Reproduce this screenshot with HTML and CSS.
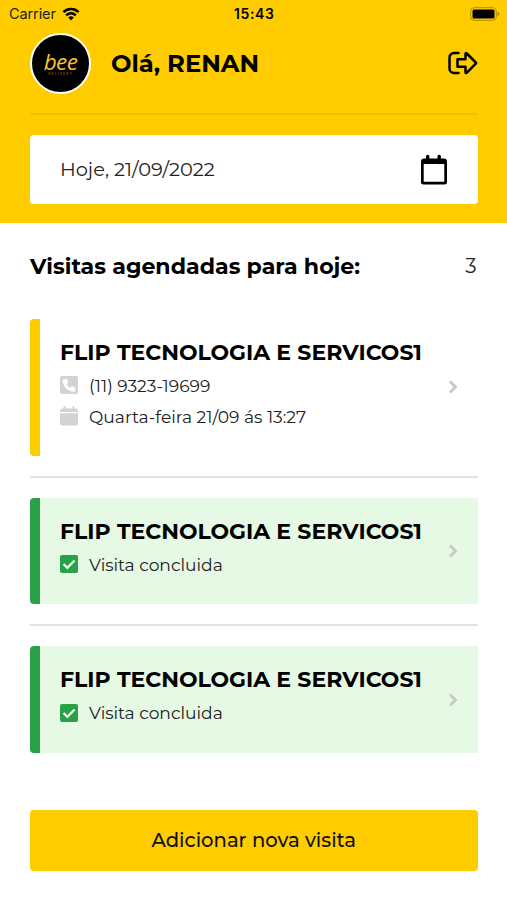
FILE: index.html
```html
<!DOCTYPE html>
<html lang="pt-BR">
<head>
<meta charset="utf-8">
<meta name="viewport" content="width=device-width, initial-scale=1">
<title>Visitas</title>
<link rel="stylesheet" href="styles.css">
</head>
<body>
<header class="header">
  <div class="status">
    <div class="carrier"><span>Carrier</span>
      <svg width="18" height="14" viewBox="0 0 18 14"><path d="M9 13.4 6.2 10.5a4 4 0 0 1 5.600 0Z"/><path d="M4.200 8.300a6.800 6.800 0 0 1 9.600 0M1.400 5.100a10.900 10.900 0 0 1 15.200 0" fill="none" stroke="#000" stroke-width="2.500"/></svg>
    </div>
    <time class="clock">15:43</time>
    <svg class="battery" width="30" height="14" viewBox="0 0 30 14"><rect x=".7" y=".7" width="25.6" height="12.6" rx="3.5" fill="none" stroke="#b08e00"/><rect x="2.5" y="2.5" width="22" height="9" rx="1.5"/><path d="M27.5 4.800q2 .8 2 2.200t-2 2.200z" fill="#b08e00"/></svg>
  </div>
  <div class="profile">
    <div class="logo"><span class="brand">bee</span><span class="brand-sub">DELIVERY</span></div>
    <h1>Olá, RENAN</h1>
    <svg class="exit" width="31" height="24" viewBox="0 0 31 24" fill="none" stroke="#000" stroke-width="2.5" stroke-linejoin="round" stroke-linecap="round"><path d="M11.500 2H7a4.500 4.500 0 0 0-4.500 4.500v11A4.500 4.500 0 0 0 7 22h4.500"/><path d="M10.500 8.200h8V3q0-1.500 1.300-.5l9 9q.7.600 0 1.200l-9 9q-1.300 1-1.300-.5v-5.500h-8z"/></svg>
  </div>
  <div class="date-field"><span>Hoje, 21/09/2022</span>
    <svg width="28" height="32" viewBox="0 0 28 32"><path d="M7.700 2.500v6M19.200 2.500v6" fill="none" stroke="#000" stroke-width="3.400" stroke-linecap="round"/><path d="M4 4.500h20a3 3 0 0 1 3 3v20.500a2.500 2.500 0 0 1-2.500 2.500h-21A2.500 2.500 0 0 1 1 28V7.500a3 3 0 0 1 3-3M3.700 10v17.800h20.600V10z" fill-rule="evenodd"/></svg>
  </div>
</header>
<main>
  <div class="heading"><h2>Visitas agendadas para hoje:</h2><span class="count">3</span></div>
  <ul class="visits">
    <li class="visit pending">
      <div class="details">
        <h3>FLIP TECNOLOGIA E SERVICOS1</h3>
        <p class="phone"><svg width="18" height="18" viewBox="0 0 18 18"><rect width="18" height="18" rx="2" fill="#d3d3d3"/><path d="m3 3.700 3-.9c.5-.1.800.1 1 .5l1.100 2.700c.1.400 0 .7-.2.900L6.400 8.200a9.500 9.500 0 0 0 3.800 3.600l1.300-1.400c.3-.3.600-.3.900-.2l2.700 1.100c.4.200.6.500.5 1l-.8 2.900q-.1.500-.7.500C8 15.500 2.500 10 2.500 4.400q0-.6.500-.7" fill="#fff"/></svg><span>(11) 9323-19699</span></p>
        <p class="when"><svg width="18" height="20" viewBox="0 0 18 20" fill="#d3d3d3"><path d="M2 2.500h1.500V1q0-1 1-1t1 1v1.500h7V1q0-1 1-1t1 1v1.500H16q2 0 2 2V6H0V4.500q0-2 2-2M0 7.200h18v10.300q0 2-2 2H2q-2 0-2-2z"/></svg><span>Quarta-feira 21/09 ás 13:27</span></p>
      </div>
      <svg class="chevron" width="10" height="16" viewBox="0 0 10 16"><path d="m2 2.500 5.500 5.500L2 13.500"/></svg>
    </li>
    <li class="visit done">
      <div class="details">
        <h3>FLIP TECNOLOGIA E SERVICOS1</h3>
        <p class="result"><svg width="18" height="18" viewBox="0 0 18 18"><rect width="18" height="18" rx="2" fill="#28a148"/><path d="m3.500 9 3.800 3.800 7.300-7.300" fill="none" stroke="#e5f9e4" stroke-width="2.400"/></svg><span>Visita concluida</span></p>
      </div>
      <svg class="chevron" width="10" height="16" viewBox="0 0 10 16"><path d="m2 2.500 5.500 5.500L2 13.500"/></svg>
    </li>
    <li class="visit done">
      <div class="details">
        <h3>FLIP TECNOLOGIA E SERVICOS1</h3>
        <p class="result"><svg width="18" height="18" viewBox="0 0 18 18"><rect width="18" height="18" rx="2" fill="#28a148"/><path d="m3.500 9 3.800 3.800 7.300-7.300" fill="none" stroke="#e5f9e4" stroke-width="2.400"/></svg><span>Visita concluida</span></p>
      </div>
      <svg class="chevron" width="10" height="16" viewBox="0 0 10 16"><path d="m2 2.500 5.500 5.500L2 13.500"/></svg>
    </li>
  </ul>
  <button class="add">Adicionar nova visita</button>
</main>
</body>
</html>
```
FILE: styles.css
```css
* { box-sizing: border-box; }
body { margin: 0; height: 900px; background: #fff; color: #000; font-family: Montserrat, Inter, sans-serif; overflow: hidden; }
h1, h2, h3, p, ul { margin: 0; padding: 0; }
svg { display: block; flex: none; }
.header { height: 223px; padding: 0 29.5px 0 30px; background: #fc0; }
.status { display: grid; grid-template-columns: 1fr auto 1fr; align-items: center; height: 27px; margin: 0 -22px 0 -21px; font-family: Inter, sans-serif; }
.carrier { display: flex; align-items: center; gap: 6px; font-size: 14.5px; letter-spacing: -.1px; color: #222; }
.clock { font-size: 14px; font-weight: 600; letter-spacing: .6px; }
.battery { justify-self: end; }
.profile { display: flex; align-items: center; height: 88px; padding-bottom: 13.500px; border-bottom: 2px solid #f0c000; }
.logo { display: flex; flex-direction: column; align-items: center; width: 61px; height: 61px; padding-top: 15px; border: 2px solid #fff; border-radius: 50%; background: #000; color: #f5c330; }
.brand { font: italic 22.500px/24px "Open Sans", sans-serif; letter-spacing: -.6px; }
.brand-sub { margin-top: -2px; font: 3.500px/4px Inter, sans-serif; letter-spacing: 1px; color: #a17b20; }
h1 { flex: 1; margin-left: 20px; font-size: 24.300px; font-weight: 700; line-height: 30px; white-space: nowrap; }
.date-field { display: flex; align-items: center; justify-content: space-between; height: 69px; margin-top: 20px; padding: 0 30px; border-radius: 4px; background: #fff; color: #222; font-size: 19.400px; }
.date-field span { padding-bottom: 2px; }
main { padding: 0 29.5px 0 30px; }
.heading { display: flex; justify-content: space-between; align-items: center; height: 85px; }
h2 { padding-top: 2px; font-size: 22.100px; font-weight: 700; white-space: nowrap; }
.count { color: #222; font-size: 20px; padding: 0 1px 0 0; }
.visits { list-style: none; }
.visit { position: relative; display: flex; align-items: center; justify-content: space-between; padding-right: 20px; border-left: 10px solid #fc0; border-radius: 4px 0 0 4px; }
.pending { height: 137.500px; margin-top: 10.700px; }
.visit + .visit { margin-top: 41.800px; }
.visit + .visit::before { content: ""; position: absolute; top: -22px; left: -10px; right: 0; height: 2px; background: #e2e2e2; }
.done { height: 106.500px; border-color: #28a148; background: #e5f9e4; }
.details { align-self: stretch; padding: 20px 0 0 20px; }
h3 { font-size: 22px; font-weight: 700; line-height: 28px; white-space: nowrap; }
.visit p { display: flex; align-items: center; gap: 11px; height: 31px; color: #222; font-size: 17.100px; white-space: nowrap; }
.visit h3 + p { margin-top: 3px; }
.chevron { fill: none; stroke: #c9c9c9; stroke-width: 2.800; }
.add { display: block; width: 100%; height: 61px; margin-top: 57px; border: 0; border-radius: 4px; background: #fc0; color: #111; font-family: inherit; font-size: 19.600px; font-weight: 500; }
```
